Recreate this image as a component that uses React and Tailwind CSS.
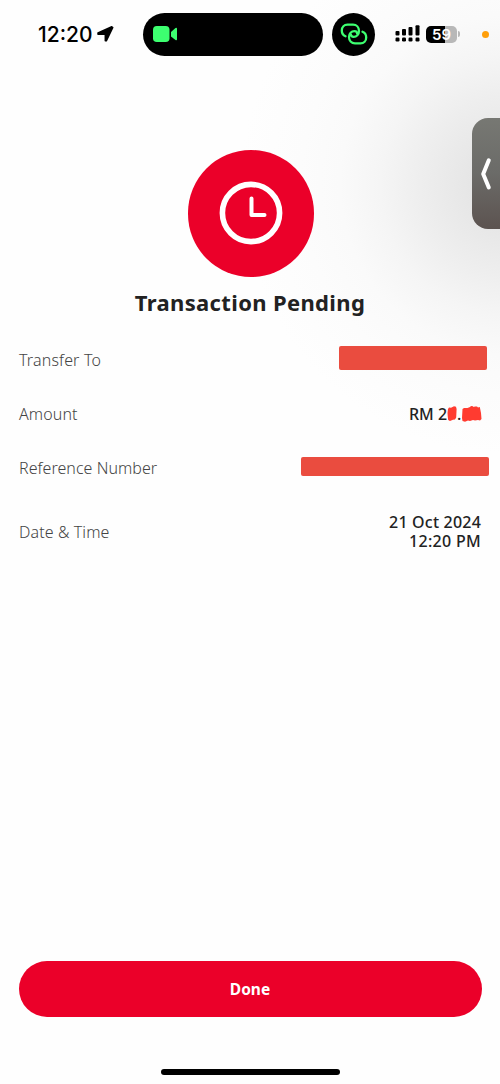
const details = [
  {
    label: "Transfer To",
    height: "h-[54px]",
    tracking: "tracking-[0.15px]",
    value: <div className="w-[148px] h-6 mr-[13px] mb-[3px] rounded-[2px] bg-[#ea4c3f]" />,
  },
  {
    label: "Amount",
    height: "h-[54px]",
    tracking: "tracking-[0.1px]",
    value: <Amount />,
  },
  {
    label: "Reference Number",
    height: "h-[55px]",
    tracking: "tracking-[0.05px]",
    value: <div className="w-[188px] h-[19px] mr-[11px] mb-[2px] rounded-[2px] bg-[#ea4c3f]" />,
  },
  {
    label: "Date & Time",
    height: "h-[73px]",
    tracking: "tracking-[0.1px]",
    value: (
      <div className="mr-[19px] text-right text-[16px] leading-[19px] font-medium text-[#222]">
        <p className="tracking-[0.2px]">21 Oct 2024</p>
        <p className="tracking-[0.3px]">12:20 PM</p>
      </div>
    ),
  },
];

function Amount() {
  return (
    <div className="flex items-center mr-[18px] mt-px text-[16px] leading-[20px] font-medium text-[#222]">
      <span className="w-[38px] whitespace-nowrap">RM 2</span>
      <svg className="w-[10px] h-[18px]" viewBox="0 0 10 18" fill="#ff3b30">
        <path d="M1 4 2 2.500 4 2.800 7 1.300 9 1.800 9.600 4 9.200 12.500 8 14.500 6 14.800 3 16 1.200 15 .800 12 .500 8Z" />
      </svg>
      <span className="w-[4px]">.</span>
      <svg className="w-[21px] h-[18px]" viewBox="0 0 21 18" fill="#ff3b30">
        <path d="M1.500 4 3 3 6.500 3 9 2 10 1 12 1.200 12.500 2 14 1.500 16 1.500 17 2.500 18.800 2 20 8 20.500 14 19 15.500 17 15 14 15.600 12 15 9 16 7 15.500 4 16.800 1.500 16 1 13Z" />
      </svg>
    </div>
  );
}

function LinkIcon() {
  return (
    <svg
      className="w-[28px] h-[24px]"
      viewBox="0 0 28 24"
      fill="none"
      stroke="#3dff70"
      strokeWidth="2.300"
      strokeLinecap="round"
    >
      <path d="M5.500 14.300C3.300 13.400 1.800 11.200 1.800 8.600 1.800 5 4.200 2.700 7.500 2.700H13C16.600 2.700 19 5.600 19 9c0 3.400-2.500 5.800-5.300 5.800-1.800 0-2.800-.9-2.800-2.200" />
      <path
        transform="rotate(180 14 12)"
        d="M5.500 14.300C3.300 13.400 1.800 11.200 1.800 8.600 1.800 5 4.200 2.700 7.500 2.700H13C16.600 2.700 19 5.600 19 9c0 3.400-2.500 5.800-5.300 5.800-1.800 0-2.800-.9-2.800-2.200"
      />
    </svg>
  );
}

function StatusBar() {
  return (
    <div className="relative h-[68px] flex items-center font-['Inter','Liberation_Sans',sans-serif]">
      <span className="ml-[38px] mt-px w-[58px] text-[21px] leading-[24px] font-medium tracking-[0px] whitespace-nowrap">
        12:20
      </span>
      <svg className="w-[18px] h-[18px] mr-[29px]" viewBox="0 0 18 18">
        <path
          d="M2 8 15.800 1.800 16.800 2.500 10.300 15.800H9.300V9.200H2Z"
          fill="#000"
          stroke="#000"
          strokeWidth="1.500"
          strokeLinejoin="round"
        />
      </svg>

      {/* dynamic island */}
      <div className="w-[180px] h-[43px] rounded-full bg-black flex items-center">
        <svg className="ml-[10px] w-[24px] h-[16px]" viewBox="0 0 24 16" fill="#3dff70">
          <rect width="16.500" height="16" rx="3.800" />
          <path d="M18 6 22.500 2Q24 1.200 24 2.800V13.200Q24 14.800 22.500 14L18 10.500Z" />
        </svg>
      </div>
      <div className="ml-[9px] w-[43px] h-[43px] rounded-full bg-black flex items-center justify-center">
        <LinkIcon />
      </div>

      <svg className="ml-[20px] w-[26px] h-[18px]" viewBox="0 0 26 18" fill="#000">
        <rect x="0.500" y="6" width="4" height="4.500" rx="1" />
        <rect x="7" y="4" width="4" height="6.500" rx="1" />
        <rect x="13.500" y="2" width="4" height="8.500" rx="1" />
        <rect x="20.500" y="0.300" width="4" height="10.200" rx="1" />
        <rect x="0.500" y="12.500" width="4" height="4" rx="1.200" />
        <rect x="7" y="12.500" width="4" height="4" rx="1.200" />
        <rect x="13.500" y="12.500" width="4" height="4" rx="1.200" />
        <rect x="20.500" y="12.500" width="4" height="4" rx="1.200" />
      </svg>
      <div className="ml-[5px] w-[31px] h-[17px] rounded-[5px] bg-linear-to-r from-black from-60% to-[#b8b8b8] to-60% text-center text-[15px] leading-[17px] font-semibold text-white">
        59
      </div>
      <div className="ml-[1px] w-[2px] h-[6px] rounded-r-full bg-[#b8b8b8]" />
      <div className="ml-[22px] w-[7px] h-[7px] rounded-full bg-[#ff9f0a]" />
    </div>
  );
}

function App() {
  return (
    <div className="relative w-[500px] h-[1084px] overflow-hidden flex flex-col bg-[#fefefe] bg-[radial-gradient(circle_at_510px_185px,#dedede_0px,#e6e6e6_40px,#eeeeee_90px,#f5f5f5_130px,#fafafa_170px,#fcfcfc_210px,#fefefe_270px)] font-['Noto_Sans','Open_Sans',sans-serif]">
      <StatusBar />

      <main className="flex-1 flex flex-col">
        <div className="mt-[82px] ml-[187.5px] w-[126.5px] h-[126.5px] rounded-full bg-[#eb0029] flex items-center justify-center">
          <svg
            className="w-[64px] h-[64px]"
            viewBox="0 0 64 64"
            fill="none"
            stroke="#fff"
            strokeLinecap="round"
            strokeLinejoin="round"
          >
            <circle cx="32" cy="32" r="28.600" strokeWidth="5.600" />
            <path d="M32.500 17.500V34H45.500" strokeWidth="4" />
          </svg>
        </div>
        <h1 className="mt-[9.5px] text-center text-[22px] leading-[32px] font-bold tracking-[0.35px] text-[#222]">
          Transaction Pending
        </h1>

        <div className="mt-[14px]">
          {details.map((item) => (
            <div key={item.label} className={`flex items-center justify-between ${item.height}`}>
              <span
                className={`ml-[19px] mt-px text-[16px] leading-[22px] font-light text-[#444] ${item.tracking}`}
              >
                {item.label}
              </span>
              {item.value}
            </div>
          ))}
        </div>

        <button className="mt-auto mx-[18.5px] h-[56px] pt-[2px] rounded-full bg-[#eb0029] text-[15.5px] font-bold text-white">
          Done
        </button>
        <div className="mt-[52px] mb-[9px] mx-auto w-[179px] h-[6px] rounded-full bg-black" />
      </main>

      {/* picture-in-picture handle on the screen edge */}
      <div className="absolute top-[117.5px] right-0 w-[28px] h-[111.5px] rounded-l-[16px] bg-linear-to-b from-[#777873] via-[#6b6b68] to-[#5c5350]">
        <svg
          className="absolute left-[8px] top-[39px] w-[12px] h-[34px]"
          viewBox="0 0 12 34"
          fill="none"
          stroke="#fff"
          strokeWidth="4"
          strokeLinecap="round"
          strokeLinejoin="round"
        >
          <path d="M8.800 3.300 3.200 17 8.800 30.500" />
        </svg>
      </div>
    </div>
  );
}

export default App;
